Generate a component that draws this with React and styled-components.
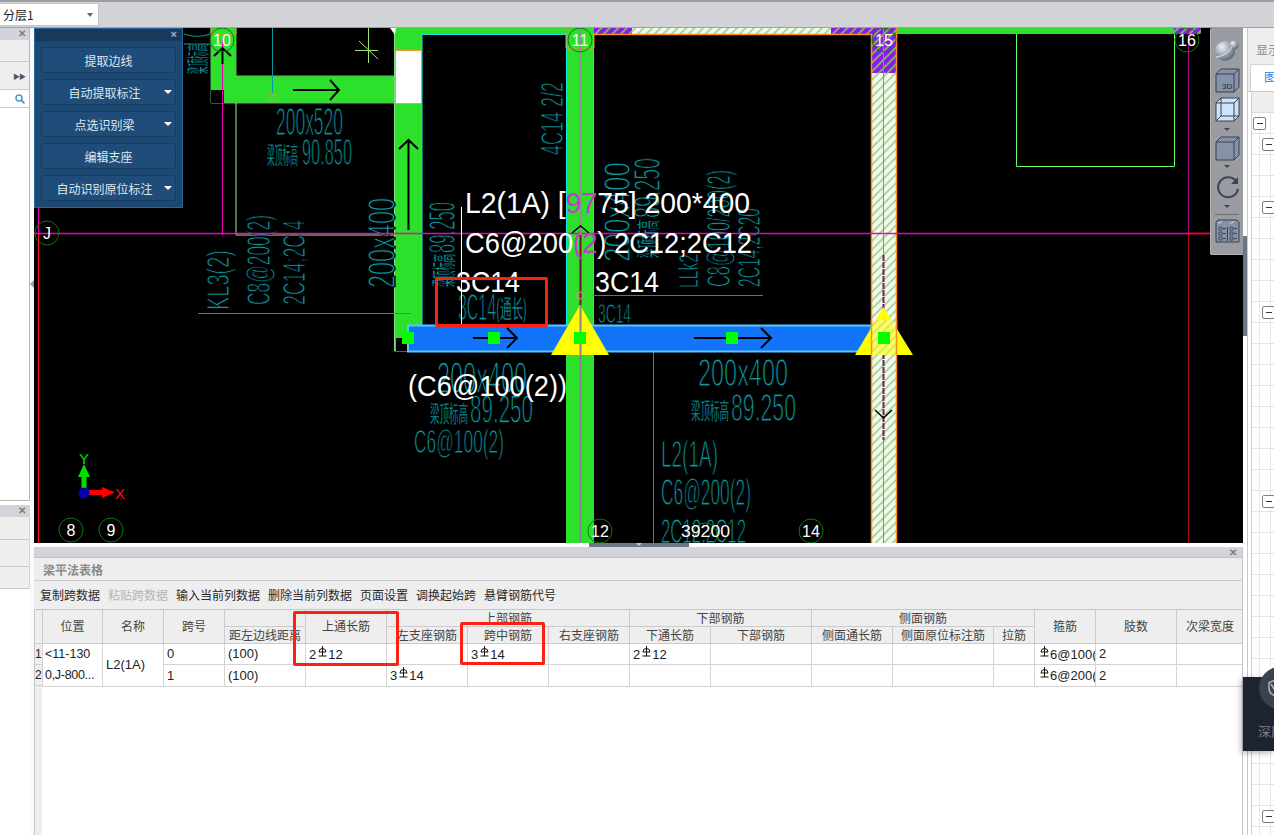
import React from "react";
import styled, { createGlobalStyle } from "styled-components";

const SANS = `"Liberation Sans", "Noto Sans CJK SC", sans-serif`;
const CJK = `"Noto Sans CJK SC", "Liberation Sans", sans-serif`;

const Global = createGlobalStyle`
  html, body { margin: 0; padding: 0; background: #fff; overflow: hidden; }
  * { box-sizing: border-box; }
`;

const Page = styled.div`
  width: 1274px; height: 835px; display: flex; flex-direction: column;
  overflow: hidden; font-family: ${CJK}; position: relative; background: #fff;
`;
const TopBar = styled.div`
  height: 28px; flex: none; background: #d2d4d8; display: flex; align-items: flex-start;
  border-top: 2px solid #9d9ea2; border-bottom: 1px solid #9fa1a5; padding-top: 1px;
`;
const Combo = styled.div`
  width: 99px; height: 23px; background: #fff; border: 1px solid #c4c4c4; border-left: 0;
  display: flex; align-items: center; justify-content: space-between;
  padding: 0 5px 0 3px; font-size: 12px; color: #222;
`;
const ComboArrow = styled.span`
  width: 0; height: 0; border-left: 3px solid transparent; border-right: 3px solid transparent;
  border-top: 4px solid #666;
`;
const Body = styled.div`flex: 1; display: flex; min-height: 0;`;

/* left dock */
const LeftDock = styled.div`width: 30px; flex: none; display: flex; flex-direction: column; background: #fff;`;
const DockTop = styled.div`height: 473px; flex: none; border-right: 1px solid #b8b8b8; border-bottom: 1px solid #b8b8b8; display: flex; flex-direction: column;`;
const DockBottom = styled.div`margin-top: 4px; height: 84px; flex: none; display: flex; flex-direction: column; border-right: 1px solid #d5d5d5;`;
const DockHead = styled.div`
  height: 12px; flex: none; background: #d2d4d9; display: flex; align-items: center; justify-content: flex-end;
  padding-right: 3px; font-size: 10px; line-height: 1; color: #7b7d82; font-family: ${SANS}; font-weight: 700;
`;
const DockRow = styled.div`
  height: ${p => p.$h}px; flex: none; background: ${p => p.$bg || "#eeeeee"}; border-bottom: 1px solid #c9c9c9;
  display: flex; align-items: center; justify-content: flex-end; padding-right: 4px; color: #555; font-size: 7px; letter-spacing: -1px;
`;
const Gap = styled.div`width: 4px; flex: none; background: #fafafa; position: relative;`;
const Grip = styled.span`
  position: absolute; top: 252px; left: 0; width: 0; height: 0; border-top: 4px solid transparent;
  border-bottom: 4px solid transparent; border-right: 4px solid #9a9ea3;
`;

/* centre */
const Centre = styled.div`width: 1209px; flex: none; display: flex; flex-direction: column;`;
const Canvas = styled.div`height: 515px; flex: none; position: relative; background: #000; overflow: hidden;`;
const CadSvg = styled.svg`display: block; width: 1209px; height: 515px;`;
const SplitBar = styled.div`height: 4px; flex: none; background: #fff; display: flex; justify-content: center;`;
const SplitHandle = styled.div`
  width: 100px; height: 4px; background: #6b7784; display: flex; justify-content: center;
`;
const SplitTri = styled.span`width: 0; height: 0; border-left: 3px solid transparent; border-right: 3px solid transparent; border-top: 3px solid #c5c9ce;`;

const FloatPanel = styled.div`
  position: absolute; left: 0; top: 0; width: 149px; height: 180px; background: #1c4872;
  border: 1px solid #2b659d; display: flex; flex-direction: column; align-items: center;
`;
const FloatHead = styled.div`
  align-self: stretch; height: 12px; flex: none; background: #17395c; color: #9db8d4; font-family: ${SANS};
  font-size: 11px; line-height: 11px; text-align: right; padding-right: 5px; margin-bottom: 6px; font-weight: 700;
`;
const FloatButton = styled.div`
  width: 135px; height: 26px; flex: none; margin-bottom: 6px; background: #1f4c79; border: 1px solid #163c62; border-radius: 3px;
  display: flex; align-items: center; justify-content: center; position: relative;
  color: #dfe7ef; font-size: 12px; padding-right: ${p => (p.$menu ? "8px" : "0")};
`;
const MenuTri = styled.span`
  position: absolute; right: 3px; top: 10px; width: 0; height: 0; border-left: 4px solid transparent;
  border-right: 4px solid transparent; border-top: 4px solid #fff;
`;

const ViewTools = styled.div`
  position: absolute; right: 0; top: 0; width: 33px; height: 227px; background: #9a9ca2;
  border: 1px solid #b0b2b6; border-right: 0; border-top: 0; border-radius: 2px 0 0 2px; display: flex; flex-direction: column; align-items: center; padding-top: 10px;
`;
const ToolIcon = styled.svg`display: block; flex: none; margin-bottom: ${p => p.$mb || 0}px;`;
const ToolTri = styled.span`
  flex: none; width: 0; height: 0; border-left: 3px solid transparent; border-right: 3px solid transparent;
  border-top: 3px solid #3c4454; margin: ${p => p.$m};
`;
const ToolRule = styled.div`width: 24px; height: 1px; background: #6f6f6f; flex: none; margin: 6px 0 4px;`;

const RedBox = styled.div`
  position: absolute; left: ${p => p.$x}px; top: ${p => p.$y}px; width: ${p => p.$w}px; height: ${p => p.$h}px;
  border: 3px solid #fb2214; border-radius: 2px; pointer-events: none; z-index: 3;
`;

/* bottom table panel */
const TablePanel = styled.div`flex: 1; min-height: 0; display: flex; flex-direction: column; border-right: 1px solid #c4c6ca; position: relative; background: #fff;`;
const TPHead = styled.div`
  height: 11px; flex: none; background: #d2d4d9; display: flex; align-items: center; justify-content: flex-end; padding-right: 5px;
  font-family: ${SANS}; font-size: 10px; font-weight: 700; color: #7b7d82; border-bottom: 1px solid #bfc1c5;
`;
const TPTitle = styled.div`
  height: 23px; flex: none; background: #eeeeee; border-bottom: 1px solid #c9cbcf; padding-left: 9px; display: flex; align-items: center;
  font-size: 12px; font-weight: 700; color: #8a8a8a;
`;
const TPBar = styled.div`
  height: 29px; flex: none; background: #eeeeee; border-bottom: 1px solid #c6c6c6; padding: 0 0 1px 6px; display: flex; align-items: center; gap: 8px;
`;
const TPAction = styled.span`font-size: 12px; color: ${p => (p.$off ? "#b5b5b5" : "#2a2a2a")}; white-space: nowrap;`;
const TableWrap = styled.div`flex: 1; min-height: 0; display: flex; overflow: hidden;`;
const Gutter = styled.div`width: 8px; flex: none; background: #eeeeee; border-left: 1px solid #c6c6c6; display: flex; flex-direction: column;`;
const GutterCell = styled.div`
  height: ${p => p.$h}px; flex: none; border-bottom: 1px solid #cfcfcf; font-family: ${SANS}; font-size: 12px; line-height: ${p => p.$h}px; color: #222; overflow: hidden;
`;
const Grid = styled.table`
  border-collapse: collapse; table-layout: fixed; width: 1200px; flex: none; align-self: flex-start;
`;
const Th = styled.th`
  background: #eeeeee; border: 1px solid #cbcbcb; border-top: 0; font-weight: 400; font-size: 12px; color: #444; padding: 0; height: ${p => p.$h || 16}px;
  overflow: hidden; white-space: nowrap; text-align: center; line-height: 14px;
`;
const Td = styled.td`
  border: 1px solid #d4d4d4; font-family: ${SANS}; font-size: 13px; color: #222; padding: 0 0 0 3px; height: ${p => p.$h || 21}px;
  overflow: hidden; white-space: nowrap; line-height: 15px;
`;
const LocCell = styled(Td)`padding-left: 2px;`;
const LocLine = styled.div`font-size: 12.5px; line-height: 21px; letter-spacing: ${p => p.$ls || 0}px;`;
const Rebar = styled.svg`display: inline-block; width: 9px; height: 11px; vertical-align: 2px; margin: 0 1px 0 2px;`;

/* right dock */
const RightGap = styled.div`width: 5px; flex: none; background: #fff; position: relative; border-right: 1px solid #c9c9c9;`;
const RightHandle = styled.div`position: absolute; left: 0; top: 208px; width: 4px; height: 100px; background: #6b7785;`;
const RightDock = styled.div`flex: 1; min-width: 0; display: flex; flex-direction: column; background: #fff; overflow: hidden;`;
const RDHead = styled.div`height: 33px; flex: none; background: #eeeeee; padding: 15px 0 0 8px; font-size: 12px; line-height: 14px; color: #8d8d8d; white-space: nowrap;`;
const RDTabs = styled.div`height: 31px; flex: none; background: #eeeeee; padding: 3px 0 0 2px; display: flex; border-bottom: 1px solid #c9c9c9;`;
const RDTab = styled.div`flex: 1; background: #fff; border: 1px solid #d2d2d2; border-bottom: 0; border-radius: 3px 0 0 0; padding: 5px 0 0 13px; color: #2a7de1; font-size: 12px; line-height: 14px; white-space: nowrap;`;
const RDTree = styled.div`flex: 1; min-height: 0; margin-left: 3px; border-left: 1px solid #cfcfcf; display: flex; flex-direction: column;`;
const RDGrey = styled.div`height: 21px; flex: none; background: #eeeeee; border-bottom: 1px solid #dcdcdc;`;
const TreeRow = styled.div`
  height: 21px; flex: none; border-bottom: 1px solid #e4e4e4; display: flex; align-items: center; padding-left: ${p => p.$in}px;
  background: linear-gradient(#e8e8e8, #e8e8e8) 7px 0 / 1px 100% no-repeat, linear-gradient(#e8e8e8, #e8e8e8) 18px 0 / 1px 100% no-repeat;
`;
const Minus = styled.span`
  width: 13px; height: 13px; background: #fff; border: 1px solid #7e7e7e; border-radius: 2px; display: flex; align-items: center; justify-content: center; flex: none;
  &::before { content: ""; width: 6px; height: 1px; background: #333; }
`;

const Toast = styled.div`
  position: absolute; left: 1243px; top: 677px; width: 31px; height: 74px; background: #1e2330; box-shadow: -2px 2px 6px rgba(0,0,0,.3); z-index: 4;
`;
const ToastDisc = styled.div`position: absolute; left: 16px; top: -10px; width: 42px; height: 42px; border-radius: 50%; background: #3b414f; display: flex; align-items: center; padding-left: 9px;`;
const ToastText = styled.div`position: absolute; left: 15px; top: 46px; color: #7b808c; font-size: 13px; line-height: 16px; white-space: nowrap;`;

/* CAD helpers */
const TEAL = "#0c98a0";
function T({ x, y, w, h, r, cjk, fill = TEAL, children }) {
  const size = h / (cjk ? 0.9 : 0.72);
  return (
    <text x={x} y={y} fontSize={size} textLength={w} lengthAdjust="spacingAndGlyphs" fill={fill}
      stroke="#000" strokeWidth={size * (cjk ? 0.012 : 0.032)} paintOrder="fill"
      fontFamily={cjk ? CJK : SANS} transform={r ? `rotate(-90 ${x} ${y})` : undefined}>{children}</text>
  );
}
function W({ x, y, w, children }) {
  return <text x={x} y={y} fontSize="30" textLength={w} lengthAdjust="spacingAndGlyphs" fill="#fff" fontFamily={SANS}>{children}</text>;
}
function Node({ x, y, label }) {
  return (
    <g>
      <circle cx={x} cy={y} r="12" fill="none" stroke="#0c7a0c" strokeWidth="1" />
      {label && <text x={x} y={y + 6} fontSize="16" fill="#fff" textAnchor="middle" fontFamily={SANS}>{label}</text>}
    </g>
  );
}
function ArrowR({ x1, x2, y }) {
  return <path d={`M${x1} ${y}H${x2}M${x2 - 10} ${y - 10}L${x2} ${y}L${x2 - 10} ${y + 10}`} fill="none" stroke="#000" strokeWidth="2" />;
}
const Sq = ({ x }) => <rect x={x - 6} y="332" width="12" height="12" fill="#00ff00" />;

function Cad() {
  return (
    <CadSvg viewBox="34 28 1209 515">
      <defs>
        <pattern id="hatch" width="6" height="6" patternUnits="userSpaceOnUse" patternTransform="rotate(45)">
          <rect width="6" height="6" fill="#f4f9f0" />
          <rect width="2" height="6" fill="#a9d99a" />
        </pattern>
        <pattern id="hatchP" width="6" height="6" patternUnits="userSpaceOnUse" patternTransform="rotate(45)">
          <rect width="6" height="6" fill="#8a18f0" />
          <rect width="2" height="6" fill="#7fae62" />
        </pattern>
      </defs>
      <rect x="34" y="28" width="1209" height="515" fill="#000" />

      {/* teal scratch near panel */}
      <T x={206} y={74} w={30} h={20} r cjk>梁顶标高</T>
      <path d="M184 34c8 3 18 3 26 0M184 44h26" stroke={TEAL} fill="none" />

      {/* beams */}
      <path d="M211 28V103H395V76H236V28Z" fill="#2ce02c" stroke="#5fb85f" />
      <rect x="211" y="90" width="13" height="13" fill="#000" />
      <path d="M211 34H236M211 28V34M236 28V34" stroke="#ff8c1a" fill="none" />
      <path d="M236 103V235H395" stroke="#8cf78c" fill="none" />
      <rect x="395" y="28" width="27" height="323" fill="#2ce02c" />
      <path d="M394.500 30V351H408" stroke="#7fe07f" fill="none" />
      <rect x="396" y="338" width="12" height="13" fill="#000" />
      <rect x="395.500" y="50.500" width="26" height="53" fill="#fff" stroke="#ff9a2a" />
      <path d="M390 28h6l-1 7Z" fill="#fff" />
      <rect x="422" y="28" width="144" height="6" fill="#2ce02c" />
      <path d="M422 325V34.500H566" stroke="#19e6e6" fill="none" />
      <rect x="566" y="28" width="28" height="515" fill="#2ce02c" />
      <path d="M566.500 34V325M593.500 34V325" stroke="#19e6e6" fill="none" />
      <path d="M566 28V48H594V28" stroke="#ff8c1a" fill="none" />
      <rect x="594" y="28" width="38" height="6" fill="url(#hatchP)" />
      <rect x="632" y="28" width="199" height="6" fill="url(#hatch)" />
      <rect x="831" y="28" width="40" height="6" fill="url(#hatchP)" />
      <rect x="871" y="28" width="26" height="515" fill="url(#hatch)" />
      <rect x="871" y="28" width="26" height="45" fill="url(#hatchP)" />
      <path d="M594 34.500H871.500V543M896.500 28V543" stroke="#ff8c1a" fill="none" strokeWidth="1.500" />
      <rect x="897" y="28" width="277" height="6" fill="#2ce02c" />
      <rect x="1174" y="28" width="27" height="6" fill="url(#hatchP)" />
      <path d="M1016.500 34V166.500H1174.500V34" stroke="#66ff66" fill="none" />

      {/* teal annotations */}
      <T x={276} y={135} w={67} h={28}>200x520</T>
      <T x={267} y={164} w={31} h={21} cjk>梁顶标高</T>
      <T x={302} y={165} w={50} h={27}>90.850</T>
      <T x={229} y={310} w={60} h={22} r>KL3(2)</T>
      <T x={270} y={305} w={90} h={24} r>C8@200(2)</T>
      <T x={305} y={305} w={85} h={22} r>2C14;2C 4</T>
      <T x={395} y={288} w={90} h={28} r>200x400</T>
      <T x={453} y={287} w={33} h={22} r cjk>梁顶标高</T>
      <T x={455} y={253} w={51} h={27} r>89.250</T>
      <T x={563} y={155} w={73} h={22} r>4C14 2/2</T>
      <T x={458} y={320} w={38} h={26}>3C14</T>
      <T x={496} y={318} w={31} h={22} cjk>(通长)</T>
      <T x={598} y={323} w={33} h={20}>3C14</T>
      <T x={630} y={262} w={100} h={27} r>200x400</T>
      <T x={657} y={258} w={38} h={21} r cjk>梁顶标高</T>
      <T x={660} y={218} w={60} h={27} r>89.250</T>
      <T x={698} y={288} w={34} h={20} r>LLk2</T>
      <T x={730} y={287} w={117} h={24} r>C8@100/200(2)</T>
      <T x={760} y={287} w={79} h={22} r>2C14,2C20</T>
      <T x={437} y={393} w={90} h={32}>200x400</T>
      <T x={430} y={422} w={38} h={20} cjk>梁顶标高</T>
      <T x={470} y={423} w={63} h={29}>89.250</T>
      <T x={414} y={453} w={90} h={24}>C6@100(2)</T>
      <T x={698} y={386} w={90} h={28}>200x400</T>
      <T x={691} y={419} w={38} h={20} cjk>梁顶标高</T>
      <T x={731} y={421} w={65} h={28}>89.250</T>
      <T x={661} y={467} w={57} h={27}>L2(1A)</T>
      <T x={661} y={505} w={90} h={26}>C6@200(2)</T>
      <T x={661} y={543} w={85} h={25}>2C12;2C12</T>

      {/* axis lines */}
      <path d="M38.500 28V233" stroke="#e600b4" strokeWidth="1.300" />
      <path d="M38.500 233V543" stroke="#ff1020" strokeWidth="1.300" />
      <path d="M222.500 40V235" stroke="#e600b4" />
      <path d="M1188.500 28V233" stroke="#a00c8c" />
      <path d="M1188.500 233V543" stroke="#b00c18" />
      <path d="M34 233.500H1243" stroke="#f000b8" strokeWidth="1.500" />
      <path d="M1188 233.500H1243" stroke="#ff0000" strokeWidth="1.500" />
      <path d="M580.500 28V235" stroke="#8f8f8f" strokeWidth="2" />
      <path d="M580.500 235V305" stroke="#7a0c30" strokeWidth="2" />
      <path d="M580.500 305V543" stroke="#8f7f8f" strokeWidth="2" />
      <path d="M883.500 28V255" stroke="#c860c8" />
      <path d="M883.500 255V440" stroke="#7a1a60" strokeWidth="2" strokeDasharray="6 1" />
      <path d="M883.500 440V543" stroke="#d86a6a" />

      {/* teal lines */}
      <path d="M272.500 28V93" stroke={TEAL} />
      <circle cx="272.500" cy="97" r="3.500" fill="none" stroke="#e08a7a" />
      <path d="M198 313.500H411" stroke={TEAL} />
      <path d="M593 295.500H763" stroke={TEAL} />
      <circle cx="580" cy="295.500" r="3.500" fill="none" stroke="#e08a7a" />
      <path d="M653.500 338V543" stroke={TEAL} />

      {/* star */}
      <path d="M368.500 28V63M355 50.500H378M359 41L378 59" stroke="#9be66a" fill="none" />

      {/* arrows on beams */}
      <path d="M293 90H339M330 80L339 90L330 100" fill="none" stroke="#000" strokeWidth="2" />
      <path d="M408.500 140V230M399 149L408.500 140L418 149" fill="none" stroke="#000" strokeWidth="2" />
      <path d="M222.500 48V64M214 56L222.500 48L231 56" fill="none" stroke="#000" strokeWidth="2" />
      <path d="M572 233L580.500 226L589 233" fill="none" stroke="#000" strokeWidth="1.500" />
      <path d="M875 410L883.500 418L892 410" fill="none" stroke="#000" strokeWidth="1.500" />

      {/* blue beam */}
      <rect x="408" y="325.500" width="463" height="26" fill="#1273fb" stroke="#55c8ff" strokeWidth="2" />
      <path d="M871 325.500H884M871 350.500H884" stroke="#7fc4d8" strokeWidth="2" />

      {/* supports */}
      <path d="M580 305L609 355H551Z" fill="#ffff00" />
      <path d="M580.500 305V355" stroke="#8f7f8f" strokeWidth="2" />
      <path d="M883.500 307L913 355H855Z" fill="#ffff00" />
      <rect x="871" y="320" width="26" height="35" fill="url(#hatch)" opacity=".45" />
      <path d="M871.500 320V355M896.500 320V355" stroke="#ff8c1a" strokeWidth="1.500" />

      <ArrowR x1={473} x2={517} y={338} />
      <ArrowR x1={694} x2={771} y={338} />
      <Sq x={408} /><Sq x={494} /><Sq x={580} /><Sq x={732} /><Sq x={884} />

      {/* white dynamic labels */}
      <path d="M461.500 207V324" stroke="#fff" />
      <W x={465} y={213} w={285}>L2(1A) [<tspan fill="#c83cc8">97</tspan>75] 200*400</W>
      <W x={465} y={253} w={287}>C6@200<tspan fill="#c83cc8">(2</tspan>) 2C12;2C12</W>
      <W x={456} y={292} w={64}>3C14</W>
      <W x={595} y={292} w={64}>3C14</W>
      <W x={408} y={396} w={159}>(C6@100(2))</W>

      {/* grid bubbles */}
      <Node x={222} y={40} label="10" />
      <Node x={580} y={40} label="11" />
      <Node x={884} y={40} label="15" />
      <Node x={1187} y={40} label="16" />
      <Node x={47} y={233} label="J" />
      <Node x={71} y={530} label="8" />
      <Node x={111} y={530} label="9" />
      <Node x={600} y={531} label="12" />
      <Node x={705} y={535} />
      <Node x={811} y={531} label="14" />
      <text x={681} y={537} fontSize="17" fill="#fff" fontFamily={SANS} textLength="49" lengthAdjust="spacingAndGlyphs">39200</text>

      {/* gizmo */}
      <path d="M84 493V472" stroke="#00e000" strokeWidth="5" />
      <path d="M84 464L90 477H78Z" fill="#00e000" />
      <path d="M84 492.500H104" stroke="#ff0000" strokeWidth="5" />
      <path d="M115 492.500L102 487V498Z" fill="#ff0000" />
      <circle cx="84" cy="493" r="5.500" fill="#0000b4" />
      <text x={84} y={464} fontSize="15" textAnchor="middle" fill="#00e000" fontFamily={SANS}>Y</text>
      <text x={115} y={499} fontSize="15" fill="#ff1010" fontFamily={SANS}>X</text>
    </CadSvg>
  );
}

const CUBE_F = "#8592a8";
const CUBE_S = "#39404e";
function ViewToolbar() {
  return (
    <ViewTools>
      <ToolIcon width="26" height="24" viewBox="0 0 26 24" $mb={6}>
        <defs>
          <radialGradient id="sph" cx="35%" cy="30%" r="80%">
            <stop offset="0" stopColor="#eef3f8" /><stop offset="1" stopColor="#4e5a6c" />
          </radialGradient>
        </defs>
        <circle cx="11" cy="13" r="10" fill="url(#sph)" />
        <circle cx="20" cy="7" r="4.500" fill="url(#sph)" />
        <path d="M2 19C8 19 15 14 18 9" stroke="#e8eef4" fill="none" />
      </ToolIcon>
      <ToolIcon width="25" height="25" viewBox="0 0 25 25" $mb={4}>
        <path d="M1 6L6 1H24V19L19 24H1Z" fill={CUBE_F} stroke={CUBE_S} />
        <path d="M1 6H19V24M19 6L24 1" fill="none" stroke={CUBE_S} />
        <text x="7" y="21" fontSize="8" fill="#222a38" fontFamily={SANS}>3D</text>
      </ToolIcon>
      <ToolIcon width="25" height="25" viewBox="0 0 25 25">
        <path d="M1 6L6 1H24V19L19 24H1Z" fill="#cfe4fb" stroke={CUBE_S} />
        <path d="M1 6H19V24M19 6L24 1M6 1V19H24M6 19L1 24" fill="none" stroke={CUBE_S} />
      </ToolIcon>
      <ToolTri $m="6px 0 5px" />
      <ToolIcon width="25" height="25" viewBox="0 0 25 25">
        <path d="M1 6L6 1H24V19L19 24H1Z" fill={CUBE_F} stroke={CUBE_S} />
        <path d="M1 6H19V24M19 6L24 1" fill="none" stroke={CUBE_S} />
      </ToolIcon>
      <ToolTri $m="4px 0 8px" />
      <ToolIcon width="25" height="23" viewBox="0 0 25 23">
        <path d="M21 5A10 10 0 1 0 23 13" fill="none" stroke="#3c4352" strokeWidth="2" />
        <path d="M23 1V8H16Z" fill="#3c4352" />
      </ToolIcon>
      <ToolTri $m="6px 0 0" />
      <ToolRule />
      <ToolIcon width="25" height="24" viewBox="0 0 25 24">
        <path d="M1 3L3 1H22L24 3V23H1Z" fill={CUBE_F} stroke={CUBE_S} />
        <path d="M12.500 8V22" stroke={CUBE_S} fill="none" />
        <path d="M3 3l1.500 1.500L7 2M15 3l1.500 1.500L19 2" fill="none" stroke="#e8edf3" strokeWidth=".8" />
        <path d="M4 8h3v3H4zM4 13h3v3H4zM4 18h3v3H4zM15 8h3v3h-3zM15 13h3v3h-3zM15 18h3v3h-3z" fill="none" stroke={CUBE_S} strokeWidth=".8" />
        <path d="M8 9.500h3M8 14.500h3M8 19.500h3M19 9.500h3M19 14.500h3M19 19.500h3" stroke={CUBE_S} />
      </ToolIcon>
    </ViewTools>
  );
}

const Bar = () => (
  <Rebar viewBox="0 0 9 11"><path d="M1 6A3.500 3.500 0 0 1 8 6ZM4.500 0V10M0.500 10H8.500" fill="none" stroke="#111" strokeWidth="1" /></Rebar>
);

const WIDTHS = [60, 61, 61, 81, 81, 81, 81, 81, 81, 101, 81, 101, 41, 61, 81, 67];
const ACTIONS = [["复制跨数据"], ["粘贴跨数据", true], ["输入当前列数据"], ["删除当前列数据"], ["页面设置"], ["调换起始跨"], ["悬臂钢筋代号"]];
const BUTTONS = [["提取边线"], ["自动提取标注", true], ["点选识别梁", true], ["编辑支座"], ["自动识别原位标注", true]];
const MINUS_ROWS = { 0: 1, 1: 10, 4: 10, 9: 10, 18: 10, 33: 10 };

function App() {
  return (
    <Page>
      <Global />
      <TopBar>
        <Combo>分层1<ComboArrow /></Combo>
      </TopBar>
      <Body>
        <LeftDock>
          <DockTop>
            <DockHead>✕</DockHead>
            <DockRow $h={22} />
            <DockRow $h={28}>▶▶</DockRow>
            <DockRow $h={18} $bg="#fff">
              <svg width="10" height="10" viewBox="0 0 10 10">
                <circle cx="4" cy="4" r="3" fill="none" stroke="#4a98cf" strokeWidth="1.500" />
                <path d="M6.500 6.500L9.500 9.500" stroke="#4a98cf" strokeWidth="1.800" />
              </svg>
            </DockRow>
          </DockTop>
          <DockBottom>
            <DockHead>✕</DockHead>
            <DockRow $h={23} />
            <DockRow $h={27} />
            <DockRow $h={22} />
          </DockBottom>
        </LeftDock>
        <Gap><Grip /></Gap>
        <Centre>
          <Canvas>
            <Cad />
            <RedBox $x={401} $y={249} $w={113} $h={50} />
            <FloatPanel>
              <FloatHead>×</FloatHead>
              {BUTTONS.map(([t, m]) => (
                <FloatButton key={t} $menu={m}>{t}{m && <MenuTri />}</FloatButton>
              ))}
            </FloatPanel>
            <ViewToolbar />
          </Canvas>
          <SplitBar><SplitHandle><SplitTri /></SplitHandle></SplitBar>
          <TablePanel>
            <TPHead>✕</TPHead>
            <TPTitle>梁平法表格</TPTitle>
            <TPBar>
              {ACTIONS.map(([t, off]) => <TPAction key={t} $off={off}>{t}</TPAction>)}
            </TPBar>
            <TableWrap>
              <Gutter>
                <GutterCell $h={34} />
                <GutterCell $h={21}>1</GutterCell>
                <GutterCell $h={21}>2</GutterCell>
              </Gutter>
              <Grid>
                <colgroup>{WIDTHS.map((w, i) => <col key={i} style={{ width: w }} />)}</colgroup>
                <thead>
                  <tr>
                    <Th rowSpan={2}>位置</Th>
                    <Th rowSpan={2}>名称</Th>
                    <Th rowSpan={2}>跨号</Th>
                    <Th />
                    <Th rowSpan={2}>上通长筋</Th>
                    <Th colSpan={3}>上部钢筋</Th>
                    <Th colSpan={2}>下部钢筋</Th>
                    <Th colSpan={3}>侧面钢筋</Th>
                    <Th rowSpan={2}>箍筋</Th>
                    <Th rowSpan={2}>肢数</Th>
                    <Th rowSpan={2}>次梁宽度</Th>
                  </tr>
                  <tr>
                    <Th $h={17}>距左边线距离</Th>
                    <Th $h={17}>左支座钢筋</Th>
                    <Th $h={17}>跨中钢筋</Th>
                    <Th $h={17}>右支座钢筋</Th>
                    <Th $h={17}>下通长筋</Th>
                    <Th $h={17}>下部钢筋</Th>
                    <Th $h={17}>侧面通长筋</Th>
                    <Th $h={17}>侧面原位标注筋</Th>
                    <Th $h={17}>拉筋</Th>
                  </tr>
                </thead>
                <tbody>
                  <tr>
                    <LocCell rowSpan={2}><LocLine>&lt;11-130</LocLine><LocLine $ls={-0.3}>0,J-800...</LocLine></LocCell>
                    <Td rowSpan={2}>L2(1A)</Td>
                    <Td>0</Td><Td>(100)</Td>
                    <Td>2<Bar />12</Td><Td />
                    <Td>3<Bar />14</Td><Td />
                    <Td>2<Bar />12</Td><Td /><Td /><Td /><Td />
                    <Td><Bar />6@100(2)</Td><Td>2</Td><Td />
                  </tr>
                  <tr>
                    <Td>1</Td><Td>(100)</Td><Td />
                    <Td>3<Bar />14</Td><Td /><Td /><Td /><Td /><Td /><Td /><Td />
                    <Td><Bar />6@200(2)</Td><Td>2</Td><Td />
                  </tr>
                </tbody>
              </Grid>
            </TableWrap>
            <RedBox $x={259} $y={64} $w={106} $h={55} />
            <RedBox $x={426} $y={75} $w={85} $h={43} />
          </TablePanel>
        </Centre>
        <RightGap><RightHandle /></RightGap>
        <RightDock>
          <RDHead>显示设置</RDHead>
          <RDTabs><RDTab>图层</RDTab></RDTabs>
          <RDTree>
            <RDGrey />
            {Array.from({ length: 35 }, (_, i) => (
              <TreeRow key={i} $in={MINUS_ROWS[i] ?? 0}>
                {MINUS_ROWS[i] !== undefined && <Minus />}
              </TreeRow>
            ))}
          </RDTree>
        </RightDock>
      </Body>
      <Toast>
        <ToastDisc>
          <svg width="16" height="18" viewBox="0 0 16 18">
            <path d="M8 1L15 3.500V9C15 13 12 16 8 17C4 16 1 13 1 9V3.500Z" fill="none" stroke="#aeb3bd" strokeWidth="1.500" />
            <path d="M3 5L8 13L13 5" fill="none" stroke="#aeb3bd" strokeWidth="1.500" />
          </svg>
        </ToastDisc>
        <ToastText>深度</ToastText>
      </Toast>
    </Page>
  );
}

export default App;
